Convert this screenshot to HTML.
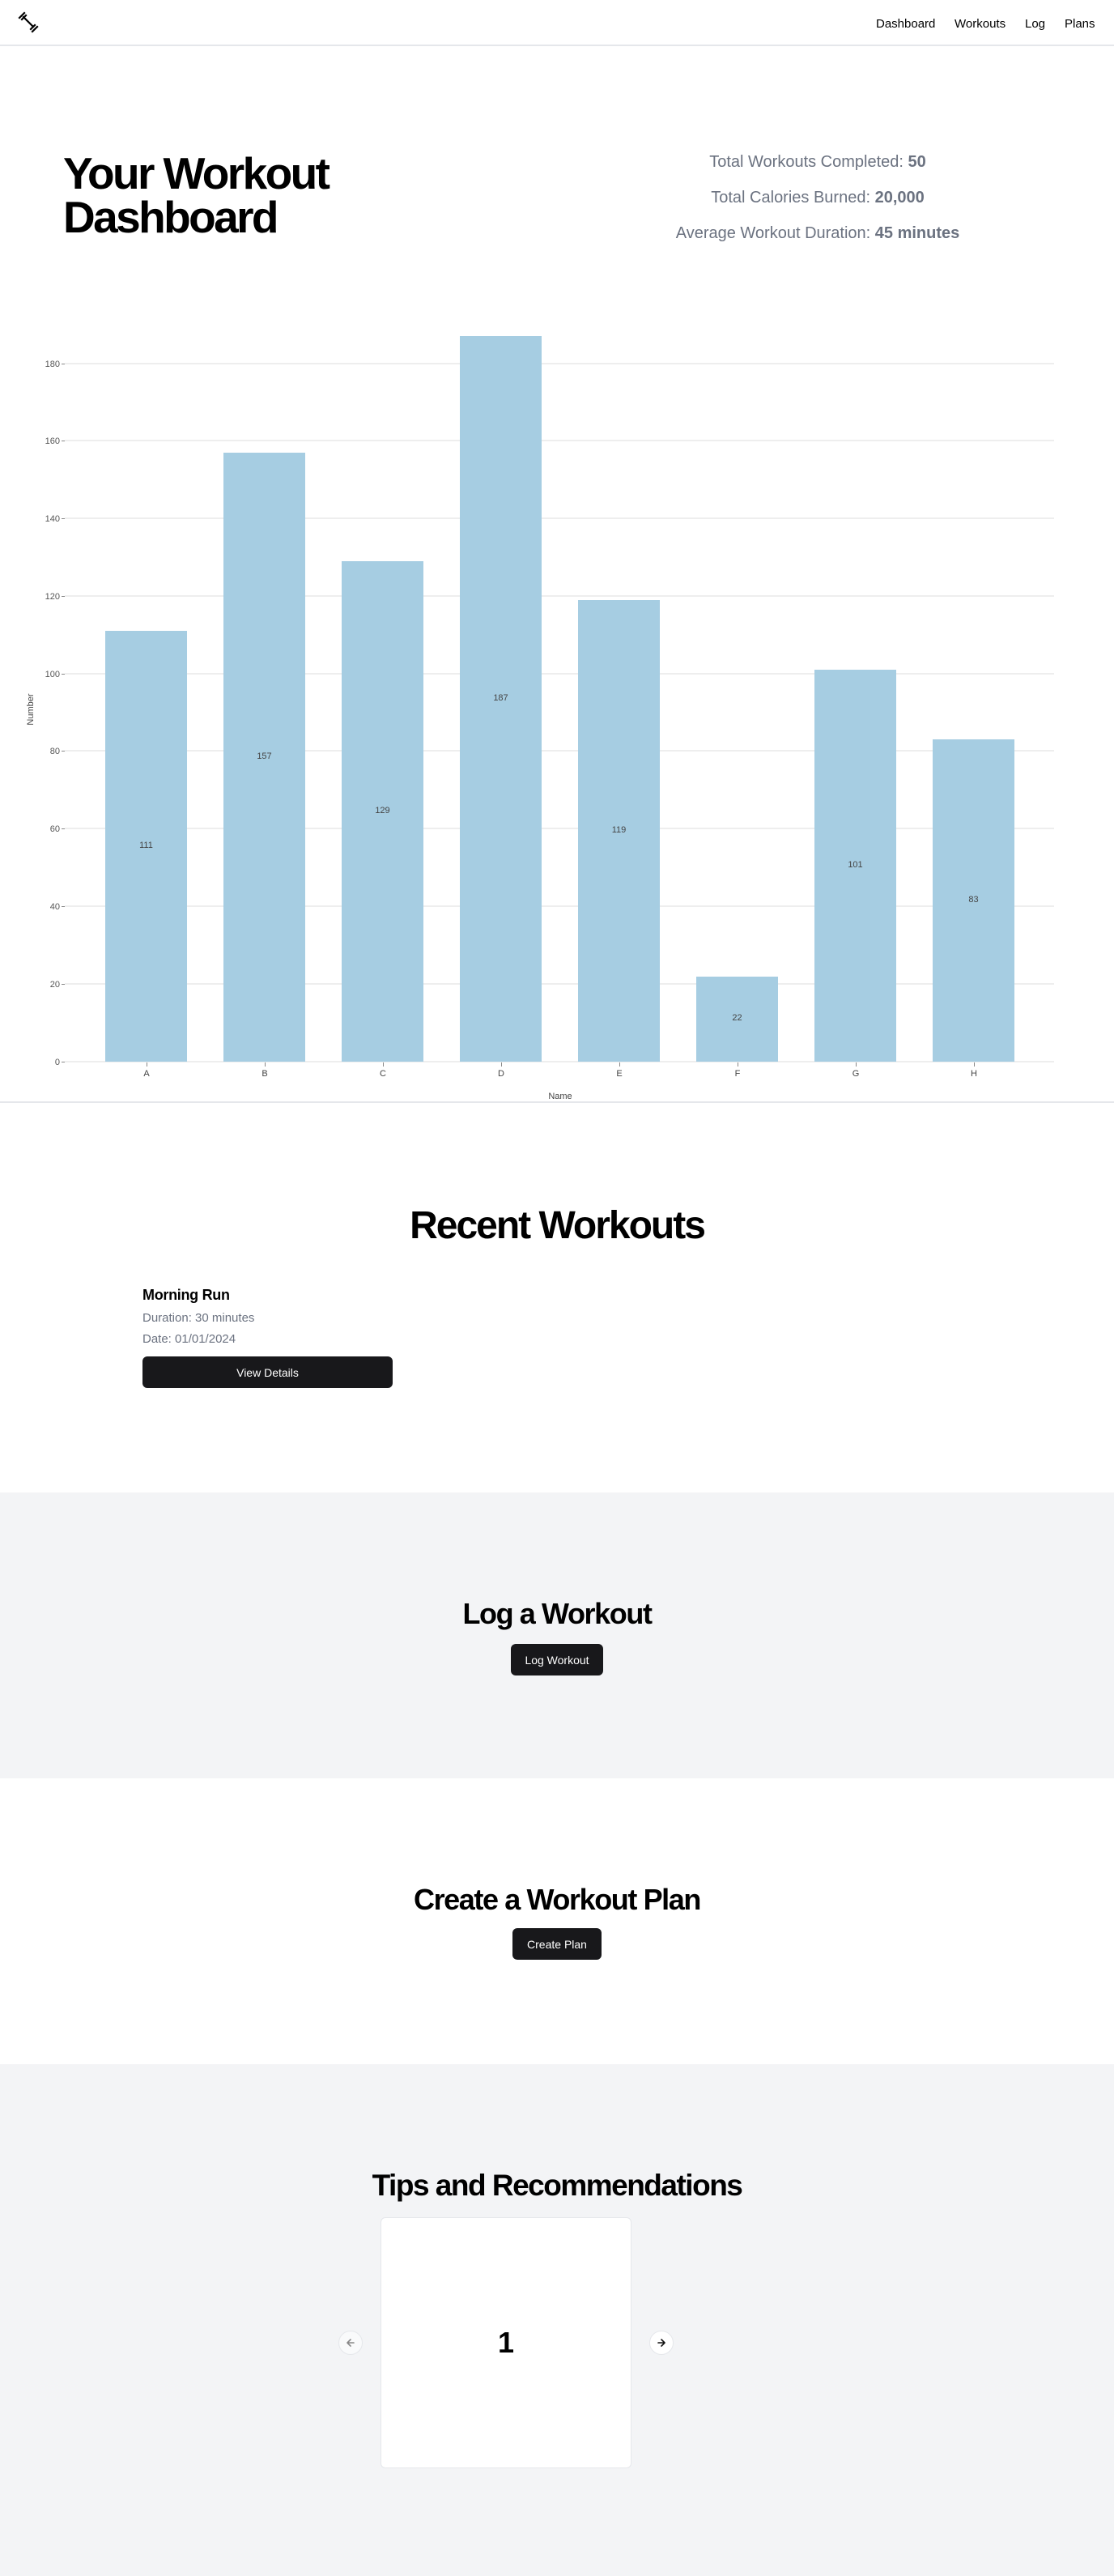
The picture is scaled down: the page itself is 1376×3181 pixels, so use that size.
<!DOCTYPE html>
<html><head><meta charset="utf-8"><style>
*{box-sizing:border-box;margin:0;padding:0}
body{width:1376px;height:3181px;font-family:"Liberation Sans",sans-serif;background:#fff;color:#000;position:relative;overflow:hidden}
.abs{position:absolute}
nav{position:absolute;left:0;top:0;width:1376px;height:57px;border-bottom:2px solid #e5e7eb}
nav a{position:absolute;top:21px;font-size:15px;color:#000;text-decoration:none}
h1{position:absolute;left:78px;top:187px;font-size:55px;line-height:54px;font-weight:700;letter-spacing:-2.6px}
.stat{position:absolute;left:760px;width:500px;text-align:center;font-size:20px;color:#6b7280}
.stat b{font-weight:700}
.grid{position:absolute;left:80px;width:1222px;height:2px;background:#eeeeee}
.yl{position:absolute;left:40px;width:34px;text-align:right;font-size:11px;color:#555}
.yt{position:absolute;left:76px;width:4px;height:1px;background:#888}
.bar{position:absolute;width:101px;background:#a6cde2}
.vl{position:absolute;width:101px;text-align:center;font-size:11px;color:#444}
.xl{position:absolute;width:40px;text-align:center;font-size:11px;color:#444;top:1320px}
.xt{position:absolute;width:1px;height:5px;background:#888;top:1312px}
.sec{position:absolute;left:0;width:1376px}
h2{position:absolute;left:0;width:1376px;text-align:center;font-weight:700}
.btn{position:absolute;background:#18181b;color:#fff;border-radius:6px;font-size:14px;display:flex;align-items:center;justify-content:center}
.circ{position:absolute;width:30px;height:30px;border-radius:50%;background:#fff;border:1px solid #e5e7eb;display:flex;align-items:center;justify-content:center}
</style></head><body>
<nav>
<svg class="abs" style="left:20px;top:14px" width="32" height="28" viewBox="0 0 32 28"><g stroke="#000" stroke-width="2.2" stroke-linecap="square" fill="none"><line x1="9" y1="7" x2="21" y2="19"/><line x1="4" y1="8" x2="10" y2="2"/><line x1="7" y1="10" x2="12" y2="5"/><line x1="18" y1="22" x2="23" y2="17"/><line x1="20" y1="25" x2="26" y2="19"/></g></svg>
<a style="left:1082px">Dashboard</a>
<a style="left:1179px">Workouts</a>
<a style="left:1266px">Log</a>
<a style="left:1315px">Plans</a>
</nav>
<h1>Your Workout<br>Dashboard</h1>
<div class="stat" style="top:189px">Total Workouts Completed: <b>50</b></div>
<div class="stat" style="top:233px">Total Calories Burned: <b>20,000</b></div>
<div class="stat" style="top:277px">Average Workout Duration: <b>45 minutes</b></div>

<div class="grid" style="top:448px"></div><div class="yl" style="top:444px">180</div><div class="yt" style="top:449px"></div>
<div class="grid" style="top:543px"></div><div class="yl" style="top:539px">160</div><div class="yt" style="top:544px"></div>
<div class="grid" style="top:639px"></div><div class="yl" style="top:635px">140</div><div class="yt" style="top:640px"></div>
<div class="grid" style="top:735px"></div><div class="yl" style="top:731px">120</div><div class="yt" style="top:736px"></div>
<div class="grid" style="top:831px"></div><div class="yl" style="top:827px">100</div><div class="yt" style="top:832px"></div>
<div class="grid" style="top:926px"></div><div class="yl" style="top:922px">80</div><div class="yt" style="top:927px"></div>
<div class="grid" style="top:1022px"></div><div class="yl" style="top:1018px">60</div><div class="yt" style="top:1023px"></div>
<div class="grid" style="top:1118px"></div><div class="yl" style="top:1114px">40</div><div class="yt" style="top:1119px"></div>
<div class="grid" style="top:1214px"></div><div class="yl" style="top:1210px">20</div><div class="yt" style="top:1215px"></div>
<div class="grid" style="top:1310px"></div><div class="yl" style="top:1306px">0</div><div class="yt" style="top:1311px"></div>

<div class="bar" style="left:130px;top:779px;height:532px"></div><div class="vl" style="left:130px;top:1038px">111</div>
<div class="bar" style="left:276px;top:559px;height:752px"></div><div class="vl" style="left:276px;top:928px">157</div>
<div class="bar" style="left:422px;top:693px;height:618px"></div><div class="vl" style="left:422px;top:995px">129</div>
<div class="bar" style="left:568px;top:415px;height:896px"></div><div class="vl" style="left:568px;top:856px">187</div>
<div class="bar" style="left:714px;top:741px;height:570px"></div><div class="vl" style="left:714px;top:1019px">119</div>
<div class="bar" style="left:860px;top:1206px;height:105px"></div><div class="vl" style="left:860px;top:1251px">22</div>
<div class="bar" style="left:1006px;top:827px;height:484px"></div><div class="vl" style="left:1006px;top:1062px">101</div>
<div class="bar" style="left:1152px;top:913px;height:398px"></div><div class="vl" style="left:1152px;top:1105px">83</div>

<div class="xt" style="left:181px"></div><div class="xl" style="left:161px">A</div>
<div class="xt" style="left:327px"></div><div class="xl" style="left:307px">B</div>
<div class="xt" style="left:473px"></div><div class="xl" style="left:453px">C</div>
<div class="xt" style="left:619px"></div><div class="xl" style="left:599px">D</div>
<div class="xt" style="left:765px"></div><div class="xl" style="left:745px">E</div>
<div class="xt" style="left:911px"></div><div class="xl" style="left:891px">F</div>
<div class="xt" style="left:1057px"></div><div class="xl" style="left:1037px">G</div>
<div class="xt" style="left:1203px"></div><div class="xl" style="left:1183px">H</div>
<div class="abs" style="left:652px;top:1348px;width:80px;text-align:center;font-size:11px;color:#444">Name</div>
<div class="abs" style="left:8px;top:870px;width:60px;text-align:center;font-size:11px;color:#444;transform:rotate(-90deg)">Number</div>
<div class="sec" style="top:1360px;height:2px;background:#e5e7eb"></div>

<h2 style="top:1486px;font-size:48px;letter-spacing:-2px">Recent Workouts</h2>
<div class="abs" style="left:176px;top:1589px;font-size:18px;font-weight:700;letter-spacing:-0.3px">Morning Run</div>
<div class="abs" style="left:176px;top:1619px;font-size:15px;color:#6b7280">Duration: 30 minutes</div>
<div class="abs" style="left:176px;top:1645px;font-size:15px;color:#6b7280">Date: 01/01/2024</div>
<div class="btn" style="left:176px;top:1675px;width:309px;height:39px">View Details</div>

<div class="sec" style="top:1843px;height:353px;background:#f3f4f6"></div>
<h2 style="top:1972px;font-size:36px;letter-spacing:-1.4px">Log a Workout</h2>
<div class="btn" style="left:631px;top:2030px;width:114px;height:39px">Log Workout</div>

<h2 style="top:2325px;font-size:36px;letter-spacing:-1.4px">Create a Workout Plan</h2>
<div class="btn" style="left:633px;top:2381px;width:110px;height:39px">Create Plan</div>

<div class="sec" style="top:2549px;height:632px;background:#f3f4f6"></div>
<h2 style="top:2678px;font-size:37px;letter-spacing:-1.5px">Tips and Recommendations</h2>
<div class="abs" style="left:470px;top:2738px;width:310px;height:310px;background:#fff;border:1px solid #e5e7eb;border-radius:6px;display:flex;align-items:center;justify-content:center;font-size:36px;font-weight:700">1</div>
<div class="circ" style="left:418px;top:2878px;background:#f9fafb"><svg width="14" height="14" viewBox="0 0 14 14" fill="none" stroke="#888" stroke-width="1.6" stroke-linecap="round" stroke-linejoin="round"><path d="M11 7H3M7 3L3 7l4 4"/></svg></div>
<div class="circ" style="left:802px;top:2878px"><svg width="14" height="14" viewBox="0 0 14 14" fill="none" stroke="#111" stroke-width="1.6" stroke-linecap="round" stroke-linejoin="round"><path d="M3 7h8M7 3l4 4-4 4"/></svg></div>
</body></html>
